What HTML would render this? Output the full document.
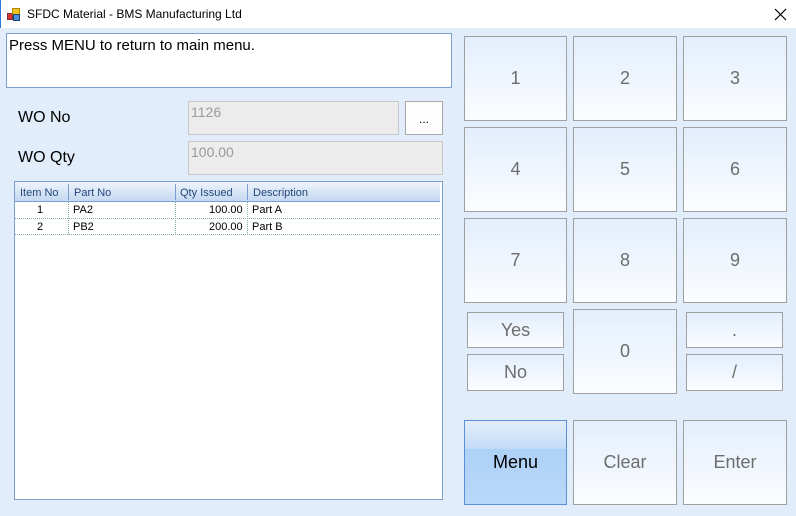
<html><head><style>
body{margin:0;width:796px;height:516px;background:#e2edfb;font-family:"Liberation Sans",sans-serif;position:relative;overflow:hidden}
.a{position:absolute;box-sizing:border-box}
.b{position:absolute;box-sizing:border-box;border:1px solid #a0a0a0;background:linear-gradient(#e3eefc,#fbfdff);color:#6d6d6d;font-size:18px;display:flex;align-items:center;justify-content:center}
.g{font-size:11px;color:#000}
</style></head><body>
<div class="a" style="left:0;top:0;width:796px;height:28px;background:#fff;border-left:1px solid #2b79d8"></div>
<div class="a" style="left:7px;top:8px;width:14px;height:14px">
<div class="a" style="left:0;top:5px;width:6px;height:7px;background:#d33;border:1px solid #733"></div>
<div class="a" style="left:5px;top:0;width:8px;height:7px;background:#f5c21b;border:1px solid #a80"></div>
<div class="a" style="left:6px;top:6px;width:7px;height:7px;background:#4a8fe0;border:1px solid #246"></div></div>
<div class="a" style="left:27px;top:7px;font-size:12px;color:#000">SFDC Material - BMS Manufacturing Ltd</div>
<svg class="a" style="left:774px;top:8px" width="13" height="13"><path d="M1 1L12 12M12 1L1 12" stroke="#000" stroke-width="1.2"/></svg>
<div class="a" style="left:6px;top:33px;width:446px;height:55px;background:#fff;border:1px solid #7a9fd0;font-size:15px;padding:3px 2px">Press MENU to return to main menu.</div>
<div class="a" style="left:18px;top:109px;font-size:16px">WO No</div>
<div class="a" style="left:18px;top:149px;font-size:16px">WO Qty</div>
<div class="a" style="left:188px;top:101px;width:211px;height:34px;background:#ececec;border:1px solid #c8c8c8;color:#9a9a9a;font-size:14px;padding:2px 2px">1126</div>
<div class="a" style="left:405px;top:101px;width:38px;height:34px;background:#fdfdfd;border:1px solid #a8a8a8;font-size:12px;text-align:center;line-height:34px">...</div>
<div class="a" style="left:188px;top:141px;width:255px;height:34px;background:#ececec;border:1px solid #c8c8c8;color:#9a9a9a;font-size:14px;padding:2px 2px">100.00</div>
<div class="a" style="left:14px;top:181px;width:429px;height:319px;background:#fff;border:1px solid #7a9fd0"></div>
<div class="a g" style="left:15px;top:182px;width:425px;height:20px;background:linear-gradient(#eef4fc,#c4d8f0);border-bottom:1px solid #7a9fd0;color:#2c4a80"></div>
<div class="a g" style="left:20px;top:187px;color:#23477c">Item No</div>
<div class="a g" style="left:74px;top:187px;color:#23477c">Part No</div>
<div class="a g" style="left:180px;top:187px;color:#23477c">Qty Issued</div>
<div class="a g" style="left:253px;top:187px;color:#23477c">Description</div>
<div class="a" style="left:68px;top:184px;width:1px;height:16px;background:#7a9fd0"></div>
<div class="a" style="left:175px;top:184px;width:1px;height:16px;background:#7a9fd0"></div>
<div class="a" style="left:247px;top:184px;width:1px;height:16px;background:#7a9fd0"></div>
<div class="a" style="left:15px;top:202px;width:425px;height:33px;border-bottom:1px dotted #8aa">
<div class="a" style="left:0;top:16px;width:425px;border-top:1px dotted #8aa"></div>
<div class="a" style="left:53px;top:0;height:33px;border-left:1px dotted #8aa"></div>
<div class="a" style="left:160px;top:0;height:33px;border-left:1px dotted #8aa"></div>
<div class="a" style="left:232px;top:0;height:33px;border-left:1px dotted #8aa"></div></div>
<div class="a g" style="left:37px;top:204px">1</div><div class="a g" style="left:73px;top:204px">PA2</div><div class="a g" style="left:209px;top:204px">100.00</div><div class="a g" style="left:252px;top:204px">Part A</div>
<div class="a g" style="left:37px;top:221px">2</div><div class="a g" style="left:73px;top:221px">PB2</div><div class="a g" style="left:209px;top:221px">200.00</div><div class="a g" style="left:252px;top:221px">Part B</div>

<div class="b" style="left:464px;top:36px;width:103px;height:85px">1</div>
<div class="b" style="left:573px;top:36px;width:104px;height:85px">2</div>
<div class="b" style="left:683px;top:36px;width:104px;height:85px">3</div>
<div class="b" style="left:464px;top:127px;width:103px;height:85px">4</div>
<div class="b" style="left:573px;top:127px;width:104px;height:85px">5</div>
<div class="b" style="left:683px;top:127px;width:104px;height:85px">6</div>
<div class="b" style="left:464px;top:218px;width:103px;height:85px">7</div>
<div class="b" style="left:573px;top:218px;width:104px;height:85px">8</div>
<div class="b" style="left:683px;top:218px;width:104px;height:85px">9</div>
<div class="b" style="left:467px;top:312px;width:97px;height:36px">Yes</div>
<div class="b" style="left:467px;top:354px;width:97px;height:37px">No</div>
<div class="b" style="left:573px;top:309px;width:104px;height:85px">0</div>
<div class="b" style="left:686px;top:312px;width:97px;height:36px">.</div>
<div class="b" style="left:686px;top:354px;width:97px;height:37px">/</div>
<div class="b" style="left:464px;top:420px;width:103px;height:85px;border-color:#5a90d4;background:linear-gradient(#e3eefc,#c4dcf8 33%,#aed1f7 34%,#bad8f9);color:#000">Menu</div>
<div class="b" style="left:573px;top:420px;width:104px;height:85px">Clear</div>
<div class="b" style="left:683px;top:420px;width:104px;height:85px">Enter</div>
</body></html>
